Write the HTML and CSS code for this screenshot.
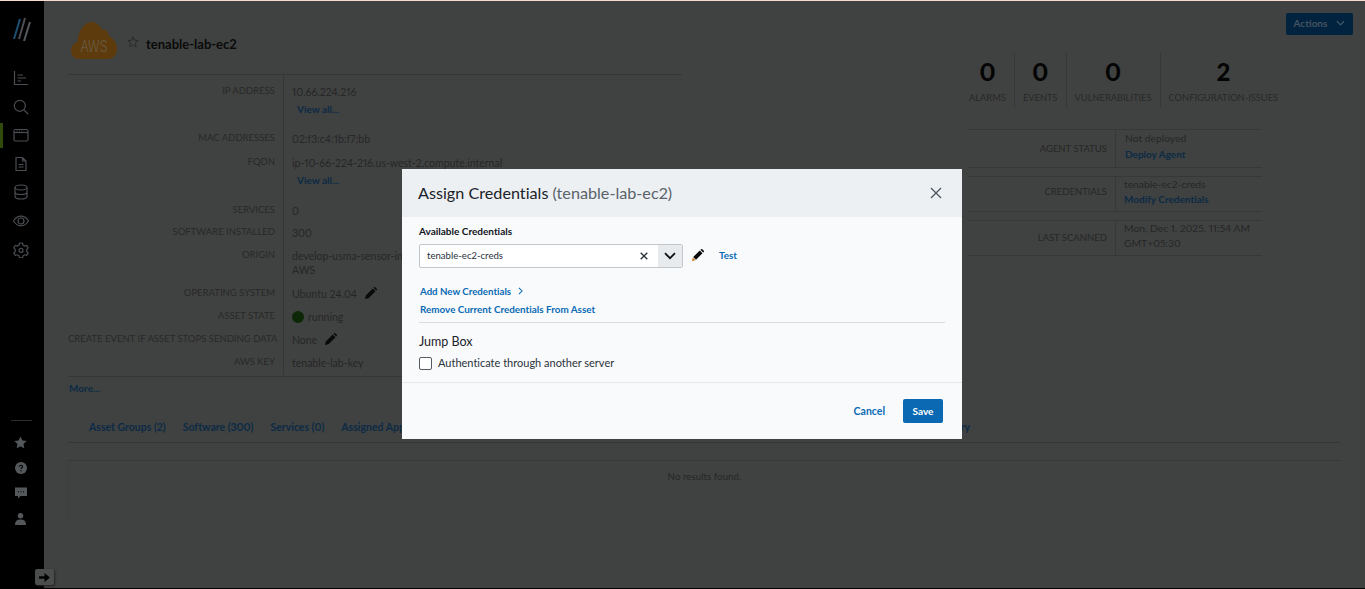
FILE: index.html
```html
<!DOCTYPE html>
<html lang="en">
<head>
<meta charset="utf-8">
<title>Assign Credentials</title>
<link rel="stylesheet" href="styles.css">
</head>
<body>
<div class="topline"></div>
<div class="app">
  <aside class="sidebar">
    <svg class="logo" viewBox="0 0 18 24" width="18" height="24"><path d="M1 22 7 2" stroke="#1d4f74" stroke-width="2"/><path d="M6 22 12 1" stroke="#4a4e52" stroke-width="2"/><path d="M11 24 17 5" stroke="#55595c" stroke-width="2"/></svg>
    <nav class="nav">
      <a class="nav-item"><svg viewBox="0 0 16 16" width="16" height="16"><path d="M1.5 1v13.5H15M4.5 5H10M4.5 8H13M4.5 11H8" class="ln"/></svg></a>
      <a class="nav-item"><svg viewBox="0 0 16 16" width="16" height="16"><circle cx="6.8" cy="6.8" r="5.5" class="ln"/><path d="M11 11l4.2 4.2" class="ln"/></svg></a>
      <a class="nav-item active"><svg viewBox="0 0 16 16" width="16" height="16"><rect x="1" y="2.5" width="14" height="11.5" rx="1.5" class="ln"/><path d="M1 5.5h14" class="ln"/><path d="M3.5 4h1M6 4h1M8.500 4h1" class="ln"/></svg></a>
      <a class="nav-item"><svg viewBox="0 0 16 16" width="16" height="16"><path d="M3 1.500h6.500L13 5v9.500H3zM9.500 1.500V5H13M5.500 8.500h5M5.500 11h5" class="ln"/></svg></a>
      <a class="nav-item"><svg viewBox="0 0 16 16" width="16" height="16"><ellipse cx="8" cy="3.500" rx="6" ry="2.500" class="ln"/><path d="M2 3.500v9c0 1.400 2.700 2.500 6 2.500s6-1.100 6-2.500v-9M2 8c0 1.400 2.700 2.500 6 2.500s6-1.100 6-2.500" class="ln"/></svg></a>
      <a class="nav-item"><svg viewBox="0 0 16 16" width="16" height="16"><path d="M.5 8C2.500 4.800 5 3.200 8 3.200S13.500 4.800 15.500 8C13.500 11.200 11 12.800 8 12.800S2.500 11.200.5 8z" class="ln"/><circle cx="8" cy="8" r="3" class="ln"/></svg></a>
      <a class="nav-item nav-gear"><svg viewBox="0 0 16 16" width="16" height="16"><path d="M6.500 1h3l.5 2 1.700 1 2-.6 1.500 2.600-1.500 1.400v2l1.500 1.400-1.500 2.600-2-.6-1.700 1-.5 2h-3l-.5-2-1.700-1-2 .6L.800 10.800l1.500-1.400v-2L.800 6l1.500-2.600 2 .6L6 3z" class="ln"/><circle cx="8" cy="8.400" r="2" class="ln"/></svg></a>
    </nav>
    <div class="side-rule"></div>
    <div class="nav-low">
      <a class="nav-item"><svg viewBox="0 0 14 14" width="13" height="13"><path d="M7 .5l2 4.300 4.700.6-3.500 3.200.9 4.700L7 11l-4.100 2.300.9-4.700L.3 5.400 5 4.800z" class="fl"/></svg></a>
      <a class="nav-item"><svg viewBox="0 0 12 12" width="12" height="12"><circle cx="6" cy="6" r="6" class="fl"/><path d="M4.300 4.700C4.300 3.700 5 3.200 6 3.200s1.700.6 1.700 1.400C7.700 5.800 6 5.800 6 7" fill="none" stroke="#000" stroke-width="1.100"/><circle cx="6" cy="8.800" r=".7" fill="#000"/></svg></a>
      <a class="nav-item"><svg viewBox="0 0 12 12" width="12" height="12"><path d="M0 .5h12v8.500H5.500L3 11.500V9H0z" class="fl"/><path d="M3 4.800h1M5.500 4.800h1M8 4.800h1" stroke="#000"/></svg></a>
      <a class="nav-item"><svg viewBox="0 0 12 13" width="11" height="12"><circle cx="6" cy="3" r="3" class="fl"/><path d="M0 13c0-4 2-6 6-6s6 2 6 6z" class="fl"/></svg></a>
    </div>
    <button class="expand" type="button"><svg viewBox="0 0 12 10" width="11" height="9"><path d="M0 3.500h6V0l6 5-6 5V6.500H0z" fill="#000"/></svg></button>
  </aside>

  <main class="main">
    <div class="top">
      <section class="left">
        <header class="asset-head">
          <svg class="cloud" viewBox="0 0 46 38" width="46" height="38"><path d="M8 37C3 37 0 33 0 28.500 0 24 3 21 6.500 20 6.500 15 8 10 11 6 14 2 17 0 20 0 25 0 29 3 31 8 35 7 38 10 37.500 14 42 16 46 21 46 27 46 33 42 37 37 37z" fill="#5e3b0c"/><text x="9.500" y="30" textLength="27" lengthAdjust="spacingAndGlyphs" class="aws">AWS</text></svg>
          <svg class="star" viewBox="0 0 14 14" width="12" height="12"><path d="M7 1l1.800 3.900 4.200.5-3.100 2.900.8 4.200L7 10.500 3.300 12.500l.8-4.200L1 5.400l4.200-.5z" fill="none" stroke="#262626" stroke-width="1"/></svg>
          <h1 class="asset-name">tenable-lab-ec2</h1>
        </header>
        <div class="info">
          <div class="lbl">IP ADDRESS</div>
          <div class="val"><div>10.66.224.216</div><a class="link ind">View all...</a></div>
          <div class="lbl">MAC ADDRESSES</div>
          <div class="val">02:f3:c4:1b:f7:bb</div>
          <div class="lbl">FQDN</div>
          <div class="val"><div>ip-10-66-224-216.us-west-2.compute.internal</div><a class="link ind">View all...</a></div>
          <div class="lbl">SERVICES</div>
          <div class="val">0</div>
          <div class="lbl">SOFTWARE INSTALLED</div>
          <div class="val">300</div>
          <div class="lbl">ORIGIN</div>
          <div class="val"><div>develop-usma-sensor-instance</div><div>AWS</div></div>
          <div class="lbl">OPERATING SYSTEM</div>
          <div class="val">Ubuntu 24.04<svg class="pen" viewBox="0 0 12 12" width="12" height="12"><path d="M0 12l.8-3.500L7.800 1.500l2.700 2.700-7 7zM8.500.8l.6-.6c.3-.3.800-.3 1.100 0l1.600 1.600c.3.300.3.800 0 1.100l-.6.600z" fill="#0a0a0a"/></svg></div>
          <div class="lbl">ASSET STATE</div>
          <div class="val state"><span class="dot"></span>running</div>
          <div class="lbl">CREATE EVENT IF ASSET STOPS SENDING DATA</div>
          <div class="val">None<svg class="pen" viewBox="0 0 12 12" width="12" height="12"><path d="M0 12l.8-3.500L7.800 1.500l2.700 2.700-7 7zM8.500.8l.6-.6c.3-.3.800-.3 1.100 0l1.600 1.600c.3.300.3.800 0 1.100l-.6.600z" fill="#0a0a0a"/></svg></div>
          <div class="lbl">AWS KEY</div>
          <div class="val">tenable-lab-key</div>
        </div>
        <a class="link more">More...</a>
      </section>

      <section class="right">
        <div class="stats">
          <div class="stat"><b>0</b><span>ALARMS</span></div>
          <div class="stat"><b>0</b><span>EVENTS</span></div>
          <div class="stat"><b>0</b><span>VULNERABILITIES</span></div>
          <div class="stat"><b>2</b><span>CONFIGURATION-ISSUES</span></div>
        </div>
        <div class="meta g1">
          <div class="m-lbl">AGENT STATUS</div>
          <div class="m-val"><div>Not deployed</div><a class="link">Deploy Agent</a></div>
        </div>
        <div class="meta g2 cred">
          <div class="m-lbl">CREDENTIALS</div>
          <div class="m-val"><div>tenable-ec2-creds</div><a class="link">Modify Credentials</a></div>
        </div>
        <div class="meta g2">
          <div class="m-lbl">LAST SCANNED</div>
          <div class="m-val"><div>Mon, Dec 1, 2025, 11:54 AM</div><div>GMT+05:30</div></div>
        </div>
      </section>

      <button class="actions" type="button">Actions<svg viewBox="0 0 10 6" width="9" height="6"><path d="M1 1l4 4 4-4" fill="none" stroke="#4f5f6c" stroke-width="1.200"/></svg></button>
    </div>

    <div class="tabs">
      <a class="link tab">Asset Groups (2)</a>
      <a class="link tab">Software (300)</a>
      <a class="link tab">Services (0)</a>
      <a class="link tab">Assigned Apps</a>
      <a class="link tab last">History</a>
    </div>
    <div class="panel">No results found.</div>
  </main>
</div>
<div class="botline"></div>

<div class="dialog">
  <div class="d-head">
    <h2 class="d-title">Assign Credentials <span>(tenable-lab-ec2)</span></h2>
    <svg class="d-close" viewBox="0 0 12 12" width="12" height="12"><path d="M1 1l10 10M11 1L1 11" stroke="#4b5661" stroke-width="1.300"/></svg>
  </div>
  <div class="d-body">
    <div class="d-label">Available Credentials</div>
    <div class="d-row">
      <div class="select">
        <span class="sel-text">tenable-ec2-creds</span>
        <svg class="sel-x" viewBox="0 0 8 8" width="8" height="8"><path d="M.7.7l6.600 6.600M7.300.7L.7 7.300" stroke="#2c3640" stroke-width="1.400"/></svg>
        <span class="sel-btn"><svg viewBox="0 0 12 8" width="12" height="8"><path d="M1 1.200l5 5 5-5" fill="none" stroke="#111" stroke-width="1.800"/></svg></span>
      </div>
      <svg class="d-pen" viewBox="0 0 12 12" width="12" height="12"><path d="M0 12l.8-3.500 2.700 2.700z" fill="#c9781d"/><path d="M1.200 8L7.800 1.500l2.700 2.700L4 10.800zM8.500.8l.6-.6c.3-.3.800-.3 1.100 0l1.600 1.600c.3.300.3.800 0 1.100l-.6.600z" fill="#0a0a0a"/></svg>
      <a class="d-link test">Test</a>
    </div>
    <a class="d-link add">Add New Credentials<svg viewBox="0 0 6 10" width="5" height="8"><path d="M1 1l4 4-4 4" fill="none" stroke="#0a6ab5" stroke-width="1.300"/></svg></a>
    <a class="d-link remove">Remove Current Credentials From Asset</a>
    <div class="d-rule"></div>
    <div class="jump">Jump Box</div>
    <label class="check"><span class="box"></span>Authenticate through another server</label>
  </div>
  <div class="d-foot">
    <a class="d-link cancel">Cancel</a>
    <button class="save" type="button">Save</button>
  </div>
</div>
</body>
</html>
```
FILE: styles.css
```css
* { box-sizing: border-box; }
html, body { margin: 0; padding: 0; height: 589px; overflow: hidden; }
body {
  font-family: Lato, "Open Sans", sans-serif;
  font-size: 10.5px;
  line-height: 14px;
  color: #262626;
  background: #404241;
  display: flex;
  flex-direction: column;
  font-variant-ligatures: none;
  font-variant-numeric: proportional-nums;
}
h1, h2 { margin: 0; }
.topline { height: 1px; background: #f6dccf; flex: none; }
.botline { height: 1px; background: #000; flex: none; }
.app { flex: 1; display: flex; min-height: 0; }

.sidebar { width: 44px; flex: none; background: #000; position: relative; display: flex; flex-direction: column; align-items: center; }
.logo { margin-top: 16px; margin-left: -1px; flex: none; }
.nav { margin-top: 23px; align-self: stretch; }
.nav-item { height: 28.5px; display: flex; align-items: center; justify-content: center; margin-left: -2px; }
.nav-item.active { position: relative; }
.nav-item.active::before { content: ""; position: absolute; left: 2px; top: 2px; width: 3px; height: 25px; background: #304a0c; }
.nav-gear { margin-top: 1px; }
.ln { fill: none; stroke: #4a4e52; stroke-width: 1.200; }
.fl { fill: #55585b; }
.side-rule { width: 21px; height: 1px; background: #2a2c2e; margin-top: 155px; margin-left: -1px; }
.nav-low { margin-top: 9px; align-self: stretch; }
.nav-low .nav-item { height: 25.500px; margin-left: -3px; }
.expand { position: absolute; left: 35px; bottom: 3px; width: 19px; height: 16px; padding: 0; border: 0; border-radius: 2px; background: #4b4c4c; display: flex; align-items: center; justify-content: center; box-shadow: 1px 1px 2px #222; }

.main { flex: 1; min-width: 0; padding-left: 24px; padding-right: 12px; }
.top { display: flex; align-items: flex-start; }
.left { width: 614px; flex: none; }
.asset-head { height: 74px; padding-top: 21px; display: flex; align-items: flex-start; padding-left: 3px; border-bottom: 1px solid #353736; }
.cloud { flex: none; }
.aws { font-family: "Liberation Sans", sans-serif; font-size: 16px; font-weight: 400; fill: #665538; }
.star { margin-left: 10px; margin-top: 14px; }
.asset-name { font-size: 13px; line-height: 16px; color: #0a0a0a; font-weight: 700; margin-left: 7px; margin-top: 14px; font-family: Lato, sans-serif; }
.info { display: grid; grid-template-columns: 215px 1fr; grid-template-rows: 47px 24px 48px 22px 23px 38px 23px 23px 23px 29px; border-bottom: 1px solid #353736; height: 302px; }
.lbl { text-align: right; padding: 9px 8px 0 0; white-space: nowrap; font-size: 9.500px; color: #282828; }
.val { padding: 10px 0 0 8px; border-left: 1px solid #353736; white-space: nowrap; font-size: 10.500px; color: #262626; }
.link { color: #0c2a45; font-weight: 700; font-size: 10px; display: block; }
.ind { margin-left: 5px; margin-top: 3px; }
.pen { margin-left: 8px; vertical-align: -1px; }
.state { display: flex; align-items: center; padding-top: 10px; align-self: start; }
.dot { width: 12px; height: 12px; border-radius: 50%; background: #0c2807; margin-right: 4px; }
.more { margin-top: 4px; margin-left: 1px; }

.right { width: 310px; margin-left: 286px; padding-top: 52px; flex: none; }
.stats { display: flex; height: 55px; }
.stat { padding: 7px 8px 3px 8px; border-left: 1px solid #363837; display: flex; flex-direction: column; align-items: center; }
.stat:first-child { border-left: 0; padding-left: 1px; }
.stat b { font-size: 24px; line-height: 24px; color: #040404; font-weight: 900; }
.stat span { font-size: 9.300px; line-height: 14px; margin-top: 7px; white-space: nowrap; color: #282828; }
.meta { width: 294px; display: flex; border-top: 1px solid #363837; border-bottom: 1px solid #363837; height: 36px; margin-bottom: 8px; }
.g1 { margin-top: 21px; height: 39px; }
.m-lbl { width: 147px; flex: none; text-align: right; padding: 0 8px 0 0; align-self: center; font-size: 9.500px; }
.cred .m-lbl { padding-bottom: 4px; }
.m-val { padding-left: 8px; border-left: 1px solid #363837; line-height: 15px; flex: 1; font-size: 10.300px; white-space: nowrap; }
.g1 .m-val { line-height: 16px; padding-left: 9px; }
.actions { margin-left: 8px; margin-top: 12px; width: 67px; height: 22px; border: 0; border-radius: 2px; background: #02233f; color: #45535f; font: 700 10px/14px Lato, sans-serif; display: flex; align-items: center; justify-content: center; gap: 9px; padding: 0 0 2px; flex: none; }

.tabs { display: flex; gap: 17px; padding: 0 370px 9px 21px; margin-right: 13px; margin-top: 25px; border-bottom: 1px solid #353736; height: 23px; }
.tab { white-space: nowrap; font-size: 10.500px; }
.last { margin-left: auto; }
.panel { margin-top: 17px; margin-right: 13px; height: 60px; border-top: 1px solid #363837; border-left: 1px solid #3c3e3d; text-align: center; padding-top: 8px; font-size: 9.800px; }

.dialog { position: absolute; left: 402px; top: 169px; width: 560px; height: 270px; background: #f9fafc; color: #1f2830; }
.d-head { height: 48px; background: #ecf0f3; display: flex; align-items: center; justify-content: space-between; padding: 0 20px 0 16px; }
.d-title { font-size: 16.200px; font-weight: 400; line-height: 20px; color: #1b2229; }
.d-title span { color: #5a626a; }
.d-body { padding: 8px 17px 0; height: 166px; border-bottom: 1px solid #e5e7ea; }
.d-label { font-weight: 700; font-size: 10px; line-height: 13px; color: #101418; }
.d-row { display: flex; align-items: center; margin-top: 6px; }
.select { width: 264px; height: 24px; border: 1px solid #c3c7cb; border-radius: 2px; background: #fff; display: flex; align-items: center; padding-left: 7px; }
.sel-text { flex: 1; font-size: 9.600px; color: #2b333b; padding-bottom: 1px; }
.sel-x { margin-right: 10px; }
.sel-btn { width: 24px; height: 22px; background: #e8ebee; display: flex; align-items: center; justify-content: center; }
.d-pen { margin-left: 9px; margin-bottom: 3px; }
.d-link { color: #0a6ab5; font-weight: 700; font-size: 9.900px; display: block; white-space: nowrap; }
.test { margin-left: 15px; padding-bottom: 2px; }
.add { margin-top: 16px; margin-left: 1px; display: flex; align-items: center; gap: 7px; font-size: 9.700px; }
.remove { margin-top: 4px; margin-left: 1px; }
.d-rule { height: 1px; background: #d9dcdf; margin-top: 6px; }
.jump { margin-top: 12px; font-size: 12.500px; line-height: 14px; color: #1b2229; }
.check { margin-top: 7px; display: flex; align-items: center; font-size: 11px; line-height: 14px; color: #2b333b; }
.box { width: 13px; height: 13px; border: 1px solid #555c63; border-radius: 2px; background: #fff; margin-right: 6px; }
.d-foot { height: 56px; display: flex; align-items: center; justify-content: flex-end; padding: 0 19px 0 0; }
.cancel { margin-right: 18px; font-size: 10.500px; }
.save { width: 40px; height: 24px; border: 0; border-radius: 2px; background: #0a69b2; color: #fff; font: 700 10px/14px Lato, sans-serif; padding: 0; }
```
